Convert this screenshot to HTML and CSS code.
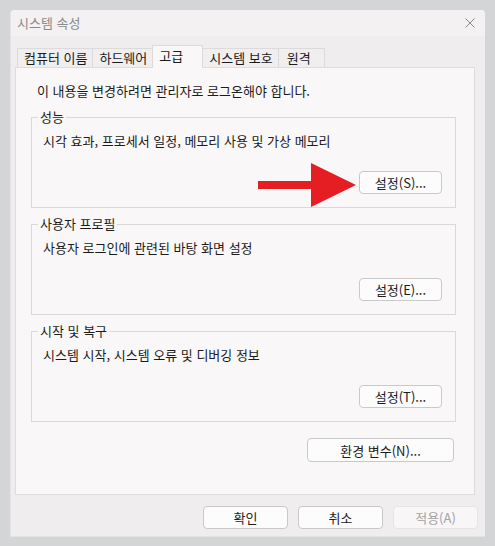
FILE: index.html
```html
<!DOCTYPE html>
<html lang="ko">
<head>
    <meta charset="UTF-8">
    <meta name="viewport" content="width=device-width, initial-scale=1.0">
    <title>시스템 속성</title>
    <link rel="stylesheet" href="styles.css">
</head>
<body>
    <div class="window">
        <div class="titlebar">
            <span>시스템 속성</span>
            <svg class="close" width="10" height="10" viewBox="0 0 10 10">
                <path d="M0.5 0.5 L9.5 9.5 M9.5 0.5 L0.5 9.5" stroke="#8a8a8a" stroke-width="1" fill="none"/>
            </svg>
        </div>

        <div class="tabs">
            <div class="tab">컴퓨터 이름</div>
            <div class="tab">하드웨어</div>
            <div class="tab active">고급</div>
            <div class="tab">시스템 보호</div>
            <div class="tab last">원격</div>
        </div>

        <div class="panel">
            <p class="intro">이 내용을 변경하려면 관리자로 로그온해야 합니다.</p>

            <fieldset class="group">
                <legend>성능</legend>
                <p>시각 효과, 프로세서 일정, 메모리 사용 및 가상 메모리</p>
                <div class="group-actions">
                    <svg class="arrow" width="98" height="44" viewBox="0 0 98 44">
                        <rect x="0" y="18" width="55" height="8" fill="#e41e22"/>
                        <polygon points="53,0 98,22 53,44" fill="#e41e22"/>
                    </svg>
                    <button class="btn">설정(S)...</button>
                </div>
            </fieldset>

            <fieldset class="group">
                <legend>사용자 프로필</legend>
                <p>사용자 로그인에 관련된 바탕 화면 설정</p>
                <div class="group-actions">
                    <button class="btn">설정(E)...</button>
                </div>
            </fieldset>

            <fieldset class="group">
                <legend>시작 및 복구</legend>
                <p>시스템 시작, 시스템 오류 및 디버깅 정보</p>
                <div class="group-actions">
                    <button class="btn">설정(T)...</button>
                </div>
            </fieldset>

            <div class="env-row">
                <button class="btn btn-env">환경 변수(N)...</button>
            </div>
        </div>

        <div class="footer">
            <button class="btn btn-footer">확인</button>
            <button class="btn btn-footer">취소</button>
            <button class="btn btn-footer" disabled>적용(A)</button>
        </div>
    </div>
</body>
</html>
```

FILE: styles.css
```css
body {
    margin: 0;
    background-color: #d4d5d7;
    font-family: "Noto Sans CJK KR", "Malgun Gothic", sans-serif;
    font-size: 13px;
    color: #1b1b1b;
}
.window {
    box-sizing: border-box;
    width: 475px;
    height: 527px;
    margin: 10px 0 0 10px;
    background-color: #efedee;
    border-left: 1px solid #e4e3e4;
    border-bottom: 1px solid #e4e3e4;
    border-radius: 4px 4px 0 0;
    display: flex;
    flex-direction: column;
}
.titlebar {
    height: 26px;
    flex: none;
    display: flex;
    align-items: center;
    justify-content: space-between;
    padding: 0 10px 0 6px;
    background-color: #f3f1f2;
    border-radius: 4px 4px 0 0;
    color: #8a8a8a;
    line-height: 16px;
}
.close {
    display: block;
    margin-top: -1px;
}
.tabs {
    display: flex;
    align-items: flex-end;
    height: 22px;
    margin: 9px 0 0 6px;
}
.tab {
    box-sizing: border-box;
    height: 19px;
    padding: 0 5px 0 6px;
    margin-right: -1px;
    border: 1px solid #dcdadb;
    border-bottom: none;
    background-color: #f0eeef;
    line-height: 17px;
    white-space: nowrap;
}
.tab.active {
    height: 23px;
    padding: 1px 19px 0 6px;
    margin-bottom: -1px;
    background-color: #f9f7f8;
    position: relative;
    z-index: 1;
}
.tab.last {
    padding: 0 13px 0 8px;
}
.panel {
    box-sizing: border-box;
    height: 428px;
    margin: 0 10px 0 4px;
    padding: 15px 18px 0 15px;
    border: 1px solid #dedcdd;
    background-color: #f9f7f8;
}
.panel p {
    margin: 0;
    line-height: 16px;
}
.intro {
    padding-left: 6px;
    margin-bottom: 10px !important;
}
.group {
    margin: 0 0 8px 0;
    padding: 8px 13px 13px 11px;
    min-width: 0;
    border: 1px solid #dad8d9;
}
.group legend {
    padding: 0 2px;
    margin-left: -5px;
    line-height: 16px;
}
.group-actions {
    display: flex;
    justify-content: flex-end;
    align-items: center;
    margin-top: 22px;
}
.arrow {
    display: block;
    margin: -8px 3px -13px 0;
}
.btn {
    box-sizing: border-box;
    width: 83px;
    height: 23px;
    padding: 0;
    font-family: inherit;
    font-size: 13px;
    color: #1b1b1b;
    background-color: #fdfcfd;
    border: 1px solid #cac9ca;
    border-radius: 4px;
}
.btn:disabled {
    color: #a3a3a3;
    background-color: #f8f6f7;
    border-color: #e6e4e5;
}
.env-row {
    display: flex;
    justify-content: flex-end;
    margin-top: 16px;
    padding-right: 2px;
}
.btn-env {
    width: 147px;
    height: 24px;
}
.footer {
    display: flex;
    justify-content: flex-end;
    gap: 10px;
    margin-top: 11px;
    padding-right: 7px;
}
.btn-footer {
    width: 85px;
}
```
